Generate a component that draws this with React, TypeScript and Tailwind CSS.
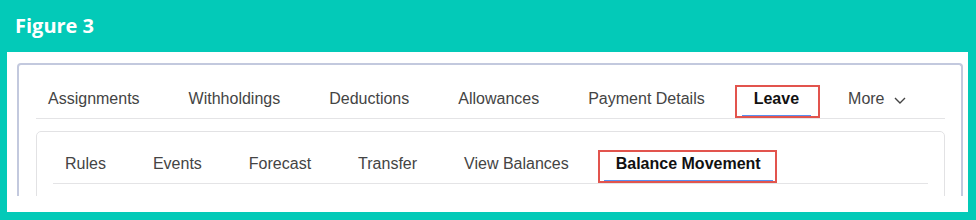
import React from 'react';

type Tab = { label: string; active?: boolean; more?: boolean; box?: string };

const topTabs: Tab[] = [
  { label: 'Assignments' },
  { label: 'Withholdings' },
  { label: 'Deductions' },
  { label: 'Allowances' },
  { label: 'Payment Details' },
  { label: 'Leave', active: true, box: '-left-[7px] -right-[9px]' },
  { label: 'More', more: true },
];

const subTabs: Tab[] = [
  { label: 'Rules' },
  { label: 'Events' },
  { label: 'Forecast' },
  { label: 'Transfer' },
  { label: 'View Balances' },
  { label: 'Balance Movement', active: true, box: '-left-[6px] -right-[4px]' },
];

function TabRow({ tabs, gap }: { tabs: Tab[]; gap: string }) {
  return (
    <div className={'flex border-b border-[#e4e4e6] ' + gap}>
      {tabs.map((t) => (
        <div
          key={t.label}
          className={
            'relative flex items-center px-3 pt-[2px] pb-[4px] leading-6 text-[16px] border-b-[3px] ' +
            (t.active
              ? 'border-[#5a8ff0] font-bold text-[#111111]'
              : 'border-transparent text-[#444444]')
          }
        >
          <span>{t.label}</span>
          {t.more && (
            <svg width="12" height="7" viewBox="0 0 12 7" className="ml-[9px] mt-[2px]">
              <path d="M1 1 L6 6 L11 1" fill="none" stroke="#444" strokeWidth="1.4" />
            </svg>
          )}
          {t.box && (
            <div
              className={'absolute top-0 -bottom-[3px] border-2 border-[#e2544d] ' + t.box}
            />
          )}
        </div>
      ))}
    </div>
  );
}

export default function App() {
  return (
    <div
      className="w-[976px] h-[220px] bg-[#03cab8] flex flex-col overflow-hidden"
      style={{ fontFamily: '"Liberation Sans", Arial, sans-serif' }}
    >
      <div className="h-[52px] shrink-0 flex items-center pl-[15px] pb-[1px]">
        <span
          className="text-white font-bold text-[20px]"
          style={{ fontFamily: '"Open Sans", sans-serif' }}
        >
          Figure 3
        </span>
      </div>

      <div className="ml-[7px] mr-[8px] mb-[8px] h-[160px] shrink-0 bg-white pl-[10px] pr-[5px] pt-[11px] pb-[16px]">
        <div className="h-[133px] overflow-hidden rounded-t-[4px] border-x-2 border-t-2 border-[#c3c9de] pl-[17px] pr-[16px] pt-[20px]">
          <TabRow tabs={topTabs} gap="gap-[25px]" />

          <div className="mt-[12px] h-[120px] rounded-[5px] border border-[#e2e2e4] pl-[16px] pr-[16px] pt-[18px]">
            <TabRow tabs={subTabs} gap="gap-[23px]" />
          </div>
        </div>
      </div>
    </div>
  );
}
